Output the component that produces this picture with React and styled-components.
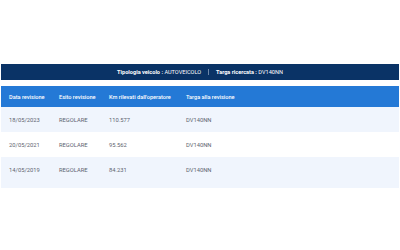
import styled, { createGlobalStyle } from "styled-components";

const GlobalStyle = createGlobalStyle`
  body {
    margin: 0;
    background: #ffffff;
    font-family: Roboto, "Liberation Sans", sans-serif;
  }
`;

const Page = styled.div`
  padding: 64px 1px 0;
`;

const SearchBar = styled.div`
  display: flex;
  justify-content: center;
  align-items: center;
  height: 16px;
  background-color: #0a3366;
  color: #ffffff;
  font-size: 5.6px;
  margin-bottom: 6px;
`;

const SearchItem = styled.span`
  padding: 0 7px;
  & + & {
    border-left: 1px solid #6d86a8;
  }
`;

const Label = styled.b`
  font-weight: 700;
`;

const Table = styled.table`
  width: 100%;
  table-layout: fixed;
  border-collapse: collapse;
  background-color: #f0f5fd;
  font-size: 5.6px;
`;

const HeadCell = styled.th`
  background-color: #2479d6;
  color: #ffffff;
  font-weight: 500;
  text-align: left;
  height: 21px;
  padding: 0 0 0 8px;
  width: ${(props) => props.w || "auto"};
`;

const Row = styled.tr`
  background-color: ${(props) => (props.alt ? "#ffffff" : "#f0f5fd")};
`;

const Cell = styled.td`
  color: #5d6470;
  font-size: 5.8px;
  height: 25px;
  padding: 0 0 0 8px;
`;

const Spacer = styled.tr`
  height: 6px;
`;

const revisions = [
  { date: "18/05/2023", esito: "REGOLARE", km: "110.577", targa: "DV140NN" },
  { date: "20/05/2021", esito: "REGOLARE", km: "95.562", targa: "DV140NN" },
  { date: "14/05/2019", esito: "REGOLARE", km: "84.231", targa: "DV140NN" },
];

const App = () => (
  <>
    <GlobalStyle />
    <Page>
      <SearchBar>
        <SearchItem>
          <Label>Tipologia veicolo : </Label>AUTOVEICOLO
        </SearchItem>
        <SearchItem>
          <Label>Targa ricercata : </Label>DV140NN
        </SearchItem>
      </SearchBar>
      <Table>
        <thead>
          <tr>
            <HeadCell w="42px">Data revisione</HeadCell>
            <HeadCell w="42px">Esito revisione</HeadCell>
            <HeadCell w="69px">Km rilevati dall'operatore</HeadCell>
            <HeadCell>Targa alla revisione</HeadCell>
          </tr>
        </thead>
        <tbody>
          {revisions.map((r, i) => (
            <Row key={r.date} alt={i % 2 === 1}>
              <Cell>{r.date}</Cell>
              <Cell>{r.esito}</Cell>
              <Cell>{r.km}</Cell>
              <Cell>{r.targa}</Cell>
            </Row>
          ))}
          <Spacer />
        </tbody>
      </Table>
    </Page>
  </>
);

export default App;
